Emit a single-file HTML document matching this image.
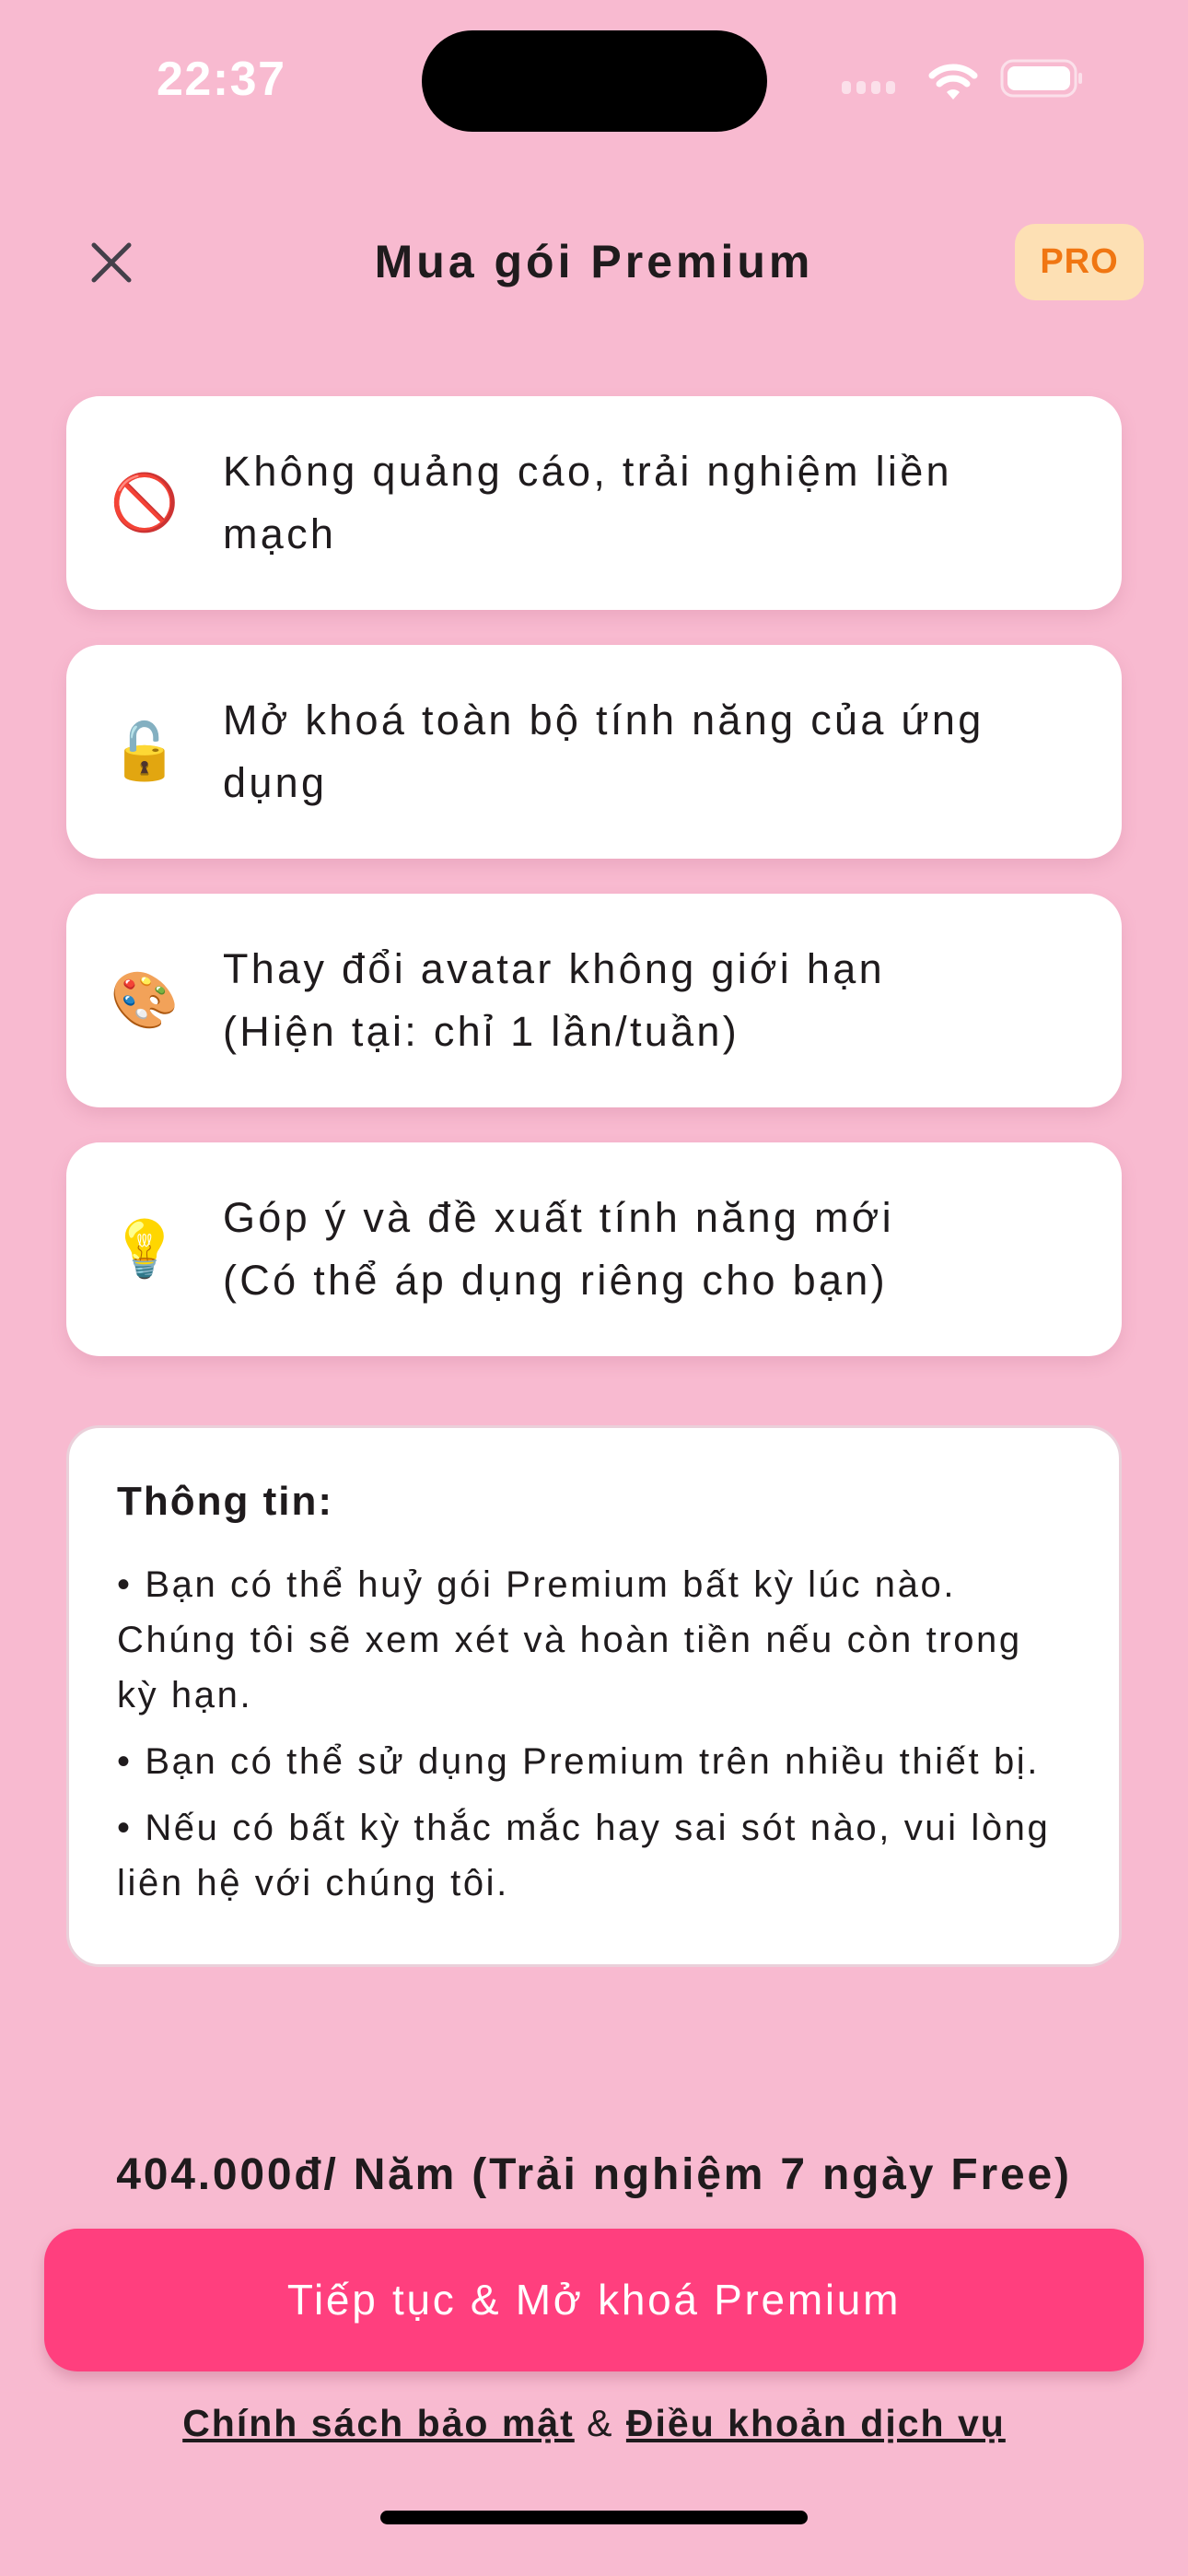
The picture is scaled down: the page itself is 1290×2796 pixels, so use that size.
<!DOCTYPE html>
<html><head><meta charset="utf-8"><style>
*{margin:0;padding:0;box-sizing:border-box}
body{width:1290px;height:2796px;background:#f8bad0;font-family:"Liberation Sans","DejaVu Sans",sans-serif;color:#1f1b1d;position:relative;overflow:hidden}
.abs{position:absolute}
.card{position:absolute;left:72px;width:1146px;height:232px;background:#fff;border-radius:36px;box-shadow:0 8px 18px rgba(180,90,120,0.18)}
.card .em{position:absolute;left:85px;top:50%;transform:translate(-50%,-50%);font-size:60px;line-height:1}
.card .tx{position:absolute;left:170px;top:50%;transform:translateY(-50%);font-size:45px;line-height:68px;letter-spacing:3.3px;white-space:nowrap}
.info p{font-size:40px;line-height:60px;letter-spacing:2.6px}
</style></head><body>
<div class="abs" style="left:170px;top:56px;font-size:52px;font-weight:bold;color:#fff;letter-spacing:1.5px">22:37</div>
<div class="abs" style="left:458px;top:33px;width:375px;height:110px;background:#000;border-radius:55px"></div>
<svg class="abs" style="left:910px;top:60px" width="300" height="60" viewBox="0 0 300 60">
<g fill="#fbe0ea"><rect x="4" y="28" width="10" height="14" rx="4"/><rect x="20" y="28" width="10" height="14" rx="4"/><rect x="36" y="28" width="10" height="14" rx="4"/><rect x="52" y="28" width="10" height="14" rx="4"/></g>
<path d="M102 22 A34 34 0 0 1 148 22" stroke="#fff" stroke-width="7" fill="none" stroke-linecap="round"/>
<path d="M110 31 A22 22 0 0 1 140 31" stroke="#fff" stroke-width="7" fill="none" stroke-linecap="round"/>
<path d="M118 40 L125 48 L132 40 A10 10 0 0 0 118 40Z" fill="#fff"/>
<rect x="178" y="6" width="80" height="38" rx="12" fill="none" stroke="#fbe0ea" stroke-width="3"/>
<rect x="184" y="12" width="68" height="26" rx="8" fill="#fff"/>
<rect x="261" y="19" width="4" height="12" rx="2" fill="#fbe0ea"/>
</svg>
<svg class="abs" style="left:98px;top:262px" width="46" height="46" viewBox="0 0 46 46"><path d="M4 4L42 42M42 4L4 42" stroke="#44404a" stroke-width="5" stroke-linecap="round"/></svg>
<div class="abs" style="left:0;width:1290px;top:250px;text-align:center;font-size:50px;font-weight:bold;line-height:68px;letter-spacing:4px">Mua gói Premium</div>
<div class="abs" style="left:1102px;top:243px;width:140px;height:83px;background:#fde0b4;border-radius:22px;color:#f07612;font-weight:bold;font-size:38px;text-align:center;line-height:83px;letter-spacing:1px">PRO</div>

<div class="card" style="top:430px"><div class="em">🚫</div><div class="tx">Không quảng cáo, trải nghiệm liền<br>mạch</div></div>
<div class="card" style="top:700px"><div class="em">🔓</div><div class="tx">Mở khoá toàn bộ tính năng của ứng<br>dụng</div></div>
<div class="card" style="top:970px"><div class="em">🎨</div><div class="tx">Thay đổi avatar không giới hạn<br>(Hiện tại: chỉ 1 lần/tuần)</div></div>
<div class="card" style="top:1240px"><div class="em">💡</div><div class="tx">Góp ý và đề xuất tính năng mới<br>(Có thể áp dụng riêng cho bạn)</div></div>

<div class="abs info" style="left:72px;top:1547px;width:1146px;height:588px;background:#fff;border:3px solid #ead0da;border-radius:36px;padding:50px 40px 0 52px">
<div style="font-size:44px;font-weight:bold;line-height:60px;margin-bottom:30px;letter-spacing:2px">Thông tin:</div>
<p>• Bạn có thể huỷ gói Premium bất kỳ lúc nào.<br>Chúng tôi sẽ xem xét và hoàn tiền nếu còn trong<br>kỳ hạn.</p>
<p style="margin-top:12px">• Bạn có thể sử dụng Premium trên nhiều thiết bị.</p>
<p style="margin-top:12px">• Nếu có bất kỳ thắc mắc hay sai sót nào, vui lòng<br>liên hệ với chúng tôi.</p>
</div>

<div class="abs" style="left:0;width:1290px;top:2328px;text-align:center;font-size:48px;font-weight:bold;line-height:66px;letter-spacing:2.8px">404.000đ/ Năm (Trải nghiệm 7 ngày Free)</div>
<div class="abs" style="left:48px;top:2419px;width:1194px;height:155px;background:#ff3f7e;border-radius:36px;box-shadow:0 8px 14px rgba(150,60,90,0.25);color:#fff;font-size:46px;text-align:center;line-height:155px;letter-spacing:2.7px">Tiếp tục &amp; Mở khoá Premium</div>
<div class="abs" style="left:0;width:1290px;top:2600px;text-align:center;font-size:41px;line-height:60px;letter-spacing:2px"><b style="text-decoration:underline">Chính sách bảo mật</b> &amp; <b style="text-decoration:underline">Điều khoản dịch vụ</b></div>
<div class="abs" style="left:413px;top:2725px;width:464px;height:15px;background:#000;border-radius:8px"></div>
</body></html>
